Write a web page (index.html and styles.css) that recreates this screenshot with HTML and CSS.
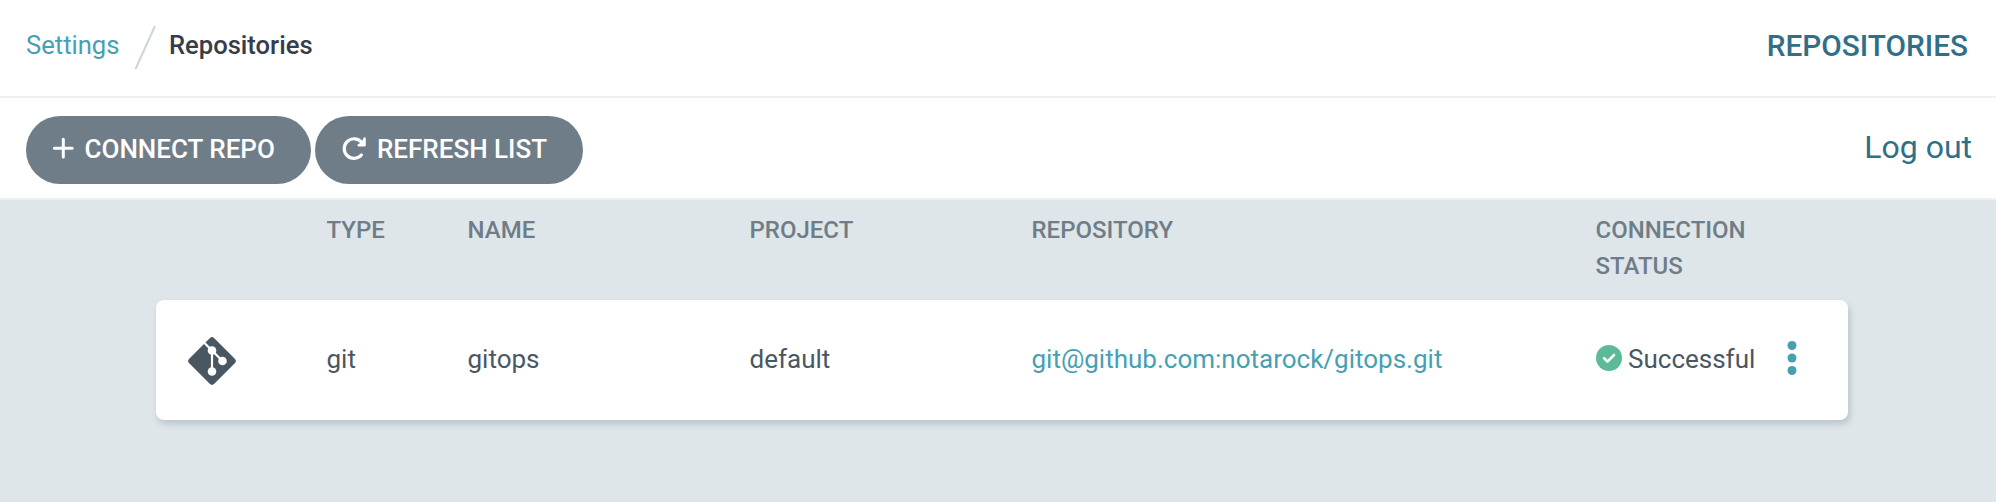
FILE: index.html
```
<!DOCTYPE html>
<html lang="en">
<head>
<meta charset="utf-8">
<title>Repositories</title>
<link rel="stylesheet" href="styles.css">
</head>
<body>
<header class="topbar">
  <nav class="breadcrumbs">
    <a class="crumb-link" href="#">Settings</a>
    <svg class="crumb-separator" width="24" height="50" viewBox="0 0 24 50"><path d="M22 4 2.5 47"/></svg>
    <span class="crumb-current">Repositories</span>
  </nav>
  <span class="page-title">REPOSITORIES</span>
</header>
<div class="toolbar">
  <div class="actions">
    <button class="button button-connect">
      <svg class="icon-plus" width="22" height="26" viewBox="0 0 22 26"><path d="M11.3 3.3v17.8M2.4 12.2h17.8"/></svg>
      <span>CONNECT REPO</span>
    </button>
    <button class="button button-refresh">
      <svg class="icon-refresh" width="26" height="28" viewBox="0 0 26 28"><path d="M20.4 20A9.8 9.8 0 1 1 20.8 7.6"/><path class="head" d="M17.6 10.2H23.6V3.4L21.2 8.4Z"/></svg>
      <span>REFRESH LIST</span>
    </button>
  </div>
  <a class="logout" href="#">Log out</a>
</div>
<main class="content">
  <div class="row table-head">
    <div class="cell"></div>
    <div class="cell">TYPE</div>
    <div class="cell">NAME</div>
    <div class="cell">PROJECT</div>
    <div class="cell">REPOSITORY</div>
    <div class="cell">CONNECTION STATUS</div>
  </div>
  <div class="row table-row">
    <div class="cell icon-cell">
      <svg class="icon-git" width="52" height="52" viewBox="0 0 52 52">
        <rect class="git-body" x="8.3" y="8.3" width="35.4" height="35.4" rx="3.2" transform="rotate(45 26 26)"/>
        <path class="git-line" d="M18.5 8 26 15.5 36.5 26M26 15.5V36.5"/>
        <circle class="git-dot" cx="26" cy="15.5" r="4.3"/>
        <circle class="git-dot" cx="36.5" cy="26" r="4.3"/>
        <circle class="git-dot" cx="26" cy="36.5" r="4.3"/>
      </svg>
    </div>
    <div class="cell">git</div>
    <div class="cell">gitops</div>
    <div class="cell">default</div>
    <div class="cell"><a class="repo-link" href="#">git@github.com:notarock/gitops.git</a></div>
    <div class="cell status-cell">
      <svg class="icon-check" width="26" height="26" viewBox="0 0 26 26"><circle cx="13" cy="13" r="13"/><path d="M8 13.2 11.5 16.7 18 10"/></svg>
      <span class="status-text">Successful</span>
      <svg class="icon-menu" width="10" height="36" viewBox="0 0 10 36"><circle cx="5" cy="5.5" r="4.5"/><circle cx="5" cy="18" r="4.5"/><circle cx="5" cy="30.5" r="4.5"/></svg>
    </div>
  </div>
</main>
</body>
</html>
```
FILE: styles.css
```
* { box-sizing: border-box; }
body {
  margin: 0;
  min-height: 502px;
  background: #dee6e9;
  color: #495763;
  font-family: Roboto, "Liberation Sans", sans-serif;
  font-size: 26px;
}
a { text-decoration: none; }
svg { flex: none; fill: none; }

.topbar {
  display: flex;
  justify-content: space-between;
  height: 98px;
  padding: 0 28px 4px 26px;
  background: #fff;
  border-bottom: 2px solid #edf1f4;
}
.breadcrumbs { display: flex; align-items: center; font-size: 25.6px; }
.crumb-link { padding-bottom: 2px; color: #479fb3; }
.crumb-separator { margin: 2px 12px 0 13.5px; stroke: #ccd6dd; stroke-width: 2; }
.crumb-current { padding-bottom: 2px; color: #363c4a; font-weight: 500; }
.page-title {
  align-self: center;
  padding-bottom: 2px;
  color: #2f6f89;
  font-size: 29.75px;
  font-weight: 500;
}

.toolbar {
  display: flex;
  justify-content: space-between;
  align-items: center;
  height: 102px;
  padding: 0 24px 0 26px;
  background: #fff;
  border-bottom: 2px solid #edf1f4;
}
.actions { display: flex; gap: 4px; padding-top: 4px; }
.button {
  display: flex;
  align-items: center;
  height: 68px;
  padding: 0 0 2px 26px;
  border: 0;
  border-radius: 34px;
  background: #6f7d88;
  color: #fff;
  font: 500 26px Roboto, "Liberation Sans", sans-serif;
  white-space: nowrap;
}
.button-connect { width: 285px; gap: 10.5px; }
.button-refresh { width: 268px; gap: 10px; }
.icon-plus { stroke: #fff; stroke-width: 3; stroke-linecap: round; }
.icon-refresh { stroke: #fff; stroke-width: 3.2; stroke-linecap: round; stroke-linejoin: round; }
.icon-refresh .head { fill: #fff; stroke-width: 2.4; }
.logout { padding-bottom: 2px; color: #2f6f89; font-size: 32px; }

.content { width: 1692px; margin: 0 auto 0 156px; }
.row { display: grid; grid-template-columns: 1fr 1fr 2fr 2fr 4fr 2fr; }
.table-head {
  height: 100px;
  padding-top: 12px;
  color: #6f7d88;
  font-size: 24px;
  font-weight: 500;
  line-height: 36px;
}
.cell { min-width: 0; padding: 0 0 2px 29.5px; }
.table-head .cell { padding-right: 30px; }
.table-row {
  height: 120px;
  align-items: center;
  border-radius: 8px;
  background: #fff;
  box-shadow: 2px 4px 6px rgba(120, 135, 145, 0.35);
}
.icon-cell { display: flex; padding: 2px 0 0 30px; }
.git-body { fill: #495763; }
.git-line { stroke: #fff; stroke-width: 2.2; }
.git-dot { fill: #fff; }
.repo-link { color: #479fb3; }
.status-cell { display: flex; align-items: center; padding-bottom: 4px; white-space: nowrap; }
.status-text { margin: 2px 32px 0 6.5px; }
.icon-check circle { fill: #5abb96; }
.icon-check path { stroke: #fff; stroke-width: 2.6; stroke-linecap: round; stroke-linejoin: round; }
.icon-menu { fill: #479fb3; }
```
